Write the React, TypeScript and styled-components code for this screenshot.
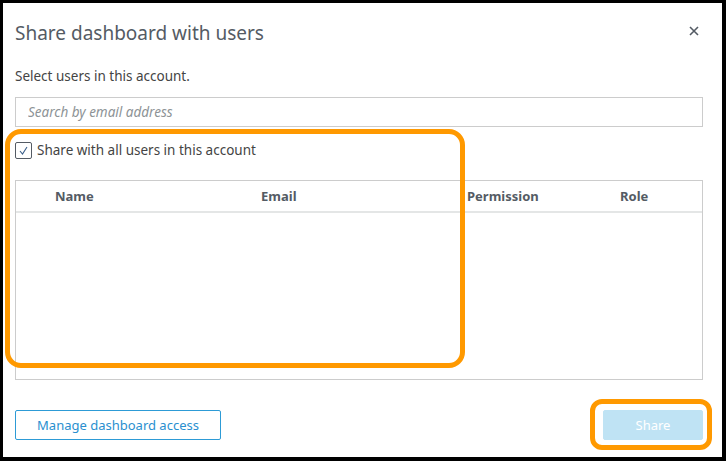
import React from 'react'
import styled, { createGlobalStyle } from 'styled-components'

const GlobalStyle = createGlobalStyle`
  html, body {
    margin: 0;
    padding: 0;
    background: #000;
  }
  * {
    box-sizing: border-box;
  }
`

const Page = styled.div`
  position: relative;
  width: 726px;
  height: 461px;
  background: #000;
  padding: 3px 4px 4px 3px;
  font-family: "Noto Sans", "Open Sans", sans-serif;
`

const Dialog = styled.section`
  height: 100%;
  background: #fff;
  padding: 16px 19px 0 12px;
  display: flex;
  flex-direction: column;
`

const Header = styled.header`
  display: flex;
  justify-content: space-between;
  align-items: flex-start;
`

const Title = styled.h2`
  margin: 0;
  font-size: 19px;
  line-height: 28px;
  font-weight: 400;
  color: #545b64;
`

const CloseButton = styled.button`
  border: none;
  background: none;
  padding: 0;
  margin: 5px 2px 0 0;
  width: 14px;
  height: 14px;
  display: flex;
  align-items: center;
  justify-content: center;
  cursor: pointer;
`

const Hint = styled.p`
  margin: 19px 0 0;
  font-size: 13.5px;
  line-height: 20px;
  color: #444;
`

const SearchInput = styled.input`
  margin-top: 11px;
  width: 100%;
  height: 30px;
  border: 1px solid #ccc;
  padding: 0 12px;
  font-family: inherit;
  font-size: 13.5px;
  color: #444;
  outline: none;

  &::placeholder {
    color: #8d9396;
    font-style: italic;
  }
`

const CheckRow = styled.label`
  margin-top: 14px;
  display: flex;
  align-items: center;
  gap: 5px;
  font-size: 13.5px;
  line-height: 18px;
  color: #444;
`

const Box = styled.span`
  width: 17px;
  height: 17px;
  border: 1px solid #545b64;
  border-radius: 2px;
  display: flex;
  align-items: center;
  justify-content: center;
`

const Table = styled.div`
  margin-top: 21px;
  height: 200px;
  border: 1px solid #ccc;
`

const HeadRow = styled.div`
  display: grid;
  grid-template-columns: 39px 206px 206px 153px 1fr;
  height: 32px;
  align-items: center;
  border-bottom: 2px solid #e4e6e6;
`

const HeadCell = styled.div`
  font-size: 13px;
  font-weight: 700;
  color: #545b64;
`

const Footer = styled.footer`
  margin-top: 30px;
  display: flex;
  justify-content: space-between;
`

const Button = styled.button<{ $primary?: boolean; $width: number }>`
  width: ${p => p.$width}px;
  height: 30px;
  border-radius: 2px;
  font-family: inherit;
  font-size: 13px;
  border: 1px solid ${p => (p.$primary ? '#bfe3f4' : '#2d9bd6')};
  background: ${p => (p.$primary ? '#bfe3f4' : '#fff')};
  color: ${p => (p.$primary ? '#fff' : '#2a8fcf')};
`

const Highlight = styled.div<{ $radius: number }>`
  position: absolute;
  border: 5px solid #ff9900;
  border-radius: ${p => p.$radius}px;
  pointer-events: none;
`

const columns = ['', 'Name', 'Email', 'Permission', 'Role']

export default function App() {
  return (
    <>
      <GlobalStyle />
      <Page>
        <Dialog>
          <Header>
            <Title>Share dashboard with users</Title>
            <CloseButton aria-label="Close">
              <svg width="10" height="10" viewBox="0 0 10 10">
                <path d="M1 1L9 9M9 1L1 9" stroke="#545b64" strokeWidth="1.6" />
              </svg>
            </CloseButton>
          </Header>
          <Hint>Select users in this account.</Hint>
          <SearchInput placeholder="Search by email address" />
          <CheckRow>
            <Box>
              <svg width="11" height="11" viewBox="0 0 11 11">
                <path d="M2 6L4.5 9L9 2" fill="none" stroke="#3b5f8a" strokeWidth="1.1" />
              </svg>
            </Box>
            Share with all users in this account
          </CheckRow>
          <Table>
            <HeadRow>
              {columns.map((c, i) => (
                <HeadCell key={i}>{c}</HeadCell>
              ))}
            </HeadRow>
          </Table>
          <Footer>
            <Button $width={206}>Manage dashboard access</Button>
            <Button $primary $width={100}>Share</Button>
          </Footer>
        </Dialog>
        <Highlight $radius={16} style={{ left: 5, top: 129, width: 460, height: 239 }} />
        <Highlight $radius={12} style={{ left: 590, top: 399, width: 122, height: 51 }} />
      </Page>
    </>
  )
}
